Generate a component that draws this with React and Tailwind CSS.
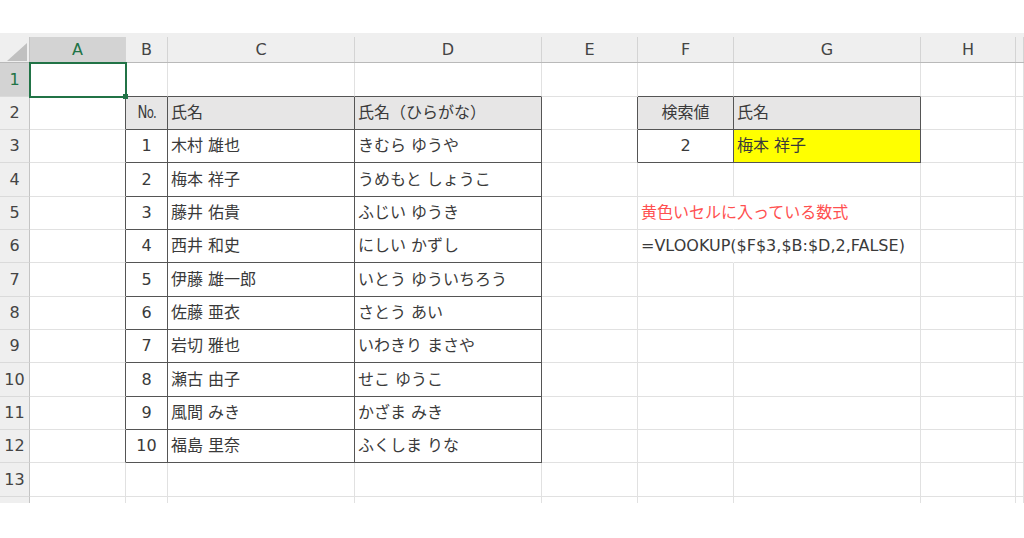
import React from "react";

const COL_LETTERS = ["A", "B", "C", "D", "E", "F", "G", "H", ""];
const ROW_HEIGHTS = [34, 33, 33, 34, 33, 33, 34, 33, 33, 34, 33, 33, 34];

const people = [
  ["木村 雄也", "きむら ゆうや"],
  ["梅本 祥子", "うめもと しょうこ"],
  ["藤井 佑貴", "ふじい ゆうき"],
  ["西井 和史", "にしい かずし"],
  ["伊藤 雄一郎", "いとう ゆういちろう"],
  ["佐藤 亜衣", "さとう あい"],
  ["岩切 雅也", "いわきり まさや"],
  ["瀬古 由子", "せこ ゆうこ"],
  ["風間 みき", "かざま みき"],
  ["福島 里奈", "ふくしま りな"],
];

// the narrow "No." sign as Excel's Japanese font draws it
const NumeroSign = () => (
  <span className="inline-block scale-x-[0.78] tracking-[-1px] text-[17px]">
    N<span className="text-[15px]">o.</span>
  </span>
);

// what sits in each cell: row number -> column index (A = 0)
const buildCells = () => {
  const cells = {};
  cells["2-1"] = { text: <NumeroSign />, center: true, fill: true };
  cells["2-2"] = { text: "氏名", fill: true };
  cells["2-3"] = { text: "氏名（ひらがな）", fill: true };
  people.forEach(([name, kana], i) => {
    const r = i + 3;
    cells[`${r}-1`] = { text: String(i + 1), center: true };
    cells[`${r}-2`] = { text: name };
    cells[`${r}-3`] = { text: kana };
  });
  cells["2-5"] = { text: "検索値", center: true, fill: true };
  cells["2-6"] = { text: "氏名", fill: true };
  cells["3-5"] = { text: "2", center: true };
  cells["3-6"] = { text: "梅本 祥子", yellow: true };
  cells["5-5"] = { text: "黄色いセルに入っている数式", red: true, spill: true };
  cells["6-5"] = { text: "=VLOOKUP($F$3,$B:$D,2,FALSE)", spill: true };
  return cells;
};

const cells = buildCells();

const inList = (r, c) => r >= 2 && r <= 12 && c >= 1 && c <= 3;
const inLookup = (r, c) => r >= 2 && r <= 3 && c >= 5 && c <= 6;
const inTable = (r, c) => inList(r, c) || inLookup(r, c);

const GRID =
  "grid grid-cols-[30px_96px_42px_187px_187px_96px_96px_187px_95px_1fr]";

const Cell = ({ r, c }) => {
  const cell = cells[`${r}-${c}`];
  const darkR = inTable(r, c) || inTable(r, c + 1);
  const darkB = inTable(r, c) || inTable(r + 1, c);
  const hideR = cell && cell.spill;

  const border = `border-r border-b ${
    hideR ? "border-r-white" : darkR ? "border-r-[#555555]" : "border-r-[#e1e1e1]"
  } ${darkB ? "border-b-[#555555]" : "border-b-[#e1e1e1]"}`;

  const bg = cell?.yellow
    ? "bg-[#ffff00]"
    : cell?.fill
    ? "bg-[#e7e6e6]"
    : "";

  return (
    <div
      className={`${border} ${bg} flex items-center whitespace-nowrap ${
        cell?.center ? "justify-center" : "pl-[3px]"
      } ${cell?.spill ? "overflow-visible relative z-10" : "overflow-hidden"} ${
        cell?.red ? "text-[#ff5050]" : "text-[#3a3a3a]"
      }`}
    >
      {cell?.text}
    </div>
  );
};

const RowHeader = ({ r }) => (
  <div
    className={`flex items-center justify-center border-r border-b border-r-[#c4c4c4] border-b-[#dadada] ${
      r === 1 ? "bg-[#d3d3d3] text-[#217346]" : "bg-[#efefef] text-[#444444]"
    }`}
  >
    {r}
  </div>
);

export default function App() {
  return (
    <div className="w-[1024px] h-[538px] overflow-hidden bg-white text-[16px] font-['DejaVu_Sans','Noto_Sans_CJK_JP',sans-serif]">
      <div className="h-[33px]" />

      {/* column headers */}
      <div className="bg-[#efefef] pt-[4px] border-b border-[#b9b9b9]">
        <div className={`${GRID} h-[25px]`}>
          <div className="relative border-r border-[#c4c4c4]">
            <svg
              className="absolute left-[7px] top-[6px]"
              width="20"
              height="18"
              viewBox="0 0 20 18"
            >
              <polygon points="0,18 20,0 20,18" fill="#c0c0c0" />
            </svg>
          </div>
          {COL_LETTERS.map((l, i) => (
            <div
              key={i}
              className={`flex items-center justify-center border-r border-[#d4d4d4] ${
                i === 0 ? "bg-[#d3d3d3] text-[#217346]" : "text-[#444444]"
              }`}
            >
              {l}
            </div>
          ))}
        </div>
      </div>

      {/* sheet body */}
      <div className="relative">
        {ROW_HEIGHTS.map((h, idx) => {
          const r = idx + 1;
          return (
            <div key={r} className={`${GRID} ${h === 34 ? "h-[34px]" : "h-[33px]"}`}>
              <RowHeader r={r} />
              {COL_LETTERS.map((_, c) => (
                <Cell key={c} r={r} c={c} />
              ))}
            </div>
          );
        })}
        <div className={`${GRID} h-[6px]`}>
          <div className="bg-[#efefef] border-r border-[#c4c4c4]" />
          {COL_LETTERS.map((_, c) => (
            <div key={c} className="border-r border-[#e1e1e1]" />
          ))}
        </div>

        {/* active cell A1 */}
        <div className="absolute left-[29px] top-[-1px] w-[98px] h-[36px] border-2 border-[#217346] z-20" />
        <div className="absolute left-[123px] top-[31px] w-[5px] h-[5px] bg-[#217346] z-20" />
      </div>
    </div>
  );
}
